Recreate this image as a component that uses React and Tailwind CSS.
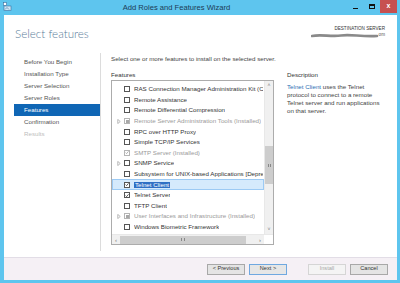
import React from 'react';

const font = { fontFamily: '"Liberation Sans", Arial, sans-serif' };

const steps = [
  { label: 'Before You Begin' },
  { label: 'Installation Type' },
  { label: 'Server Selection' },
  { label: 'Server Roles' },
  { label: 'Features', active: true },
  { label: 'Confirmation' },
  { label: 'Results', disabled: true },
];

const features = [
  { name: 'RAS Connection Manager Administration Kit (CMAK)' },
  { name: 'Remote Assistance' },
  { name: 'Remote Differential Compression' },
  { name: 'Remote Server Administration Tools (Installed)', installed: true, partial: true, expand: true },
  { name: 'RPC over HTTP Proxy' },
  { name: 'Simple TCP/IP Services' },
  { name: 'SMTP Server (Installed)', installed: true, checked: true },
  { name: 'SNMP Service', expand: true },
  { name: 'Subsystem for UNIX-based Applications [Deprecated]' },
  { name: 'Telnet Client', checked: true, selected: true },
  { name: 'Telnet Server', checked: true },
  { name: 'TFTP Client' },
  { name: 'User Interfaces and Infrastructure (Installed)', installed: true, partial: true, expand: true },
  { name: 'Windows Biometric Framework' },
];

function Checkbox({ checked, partial, installed }) {
  const border = installed ? 'border-[#b5b5b5]' : 'border-[#555]';
  return (
    <span className={`w-[6px] h-[6px] border ${border} bg-white flex items-center justify-center shrink-0`}>
      {checked && (
        <svg width="5" height="5" viewBox="0 0 10 10">
          <path d="M1.5 5.2 L4 7.8 L8.8 2" fill="none" stroke={installed ? '#9a9a9a' : '#222'} strokeWidth="1.8" />
        </svg>
      )}
      {partial && <span className="w-[3px] h-[3px] bg-[#a8a8a8]" />}
    </span>
  );
}

function FeatureRow({ f }) {
  return (
    <div className={`h-[10.6px] flex items-center pl-[1px] ${f.selected ? 'bg-[#d5eafc] border border-[#9ccaf4]' : 'border border-transparent'}`}>
      <span className="w-[10px] flex justify-center shrink-0">
        {f.expand && (
          <svg width="4" height="5" viewBox="0 0 4 6">
            <path d="M0.5 0.5 L3.5 3 L0.5 5.5 Z" fill="none" stroke="#9a9a9a" strokeWidth="0.8" />
          </svg>
        )}
      </span>
      <Checkbox checked={f.checked} partial={f.partial} installed={f.installed} />
      <span className="ml-[4px] min-w-0 overflow-hidden flex">
        <span
          className={`whitespace-nowrap text-[6.2px] leading-none ${
            f.selected ? 'bg-[#2e6fc4] text-white px-[1px]' : f.installed ? 'text-[#9a9a9a]' : 'text-[#333]'
          }`}
        >
          {f.name}
        </span>
      </span>
    </div>
  );
}

function WinButton({ children, primary, disabled }) {
  return (
    <button
      className={`h-[11px] w-[38px] text-[5.6px] leading-none flex items-center justify-center border ${
        primary
          ? 'border-[#6fa8e0] bg-[#e6e6e6] text-[#333]'
          : disabled
          ? 'border-[#d5d5d5] bg-[#f4f4f4] text-[#a8a8a8]'
          : 'border-[#a8a8a8] bg-[#e4e4e4] text-[#333]'
      }`}
    >
      {children}
    </button>
  );
}

export default function App() {
  return (
    <div className="w-[400px] h-[283px] bg-[#5ec5ee] flex flex-col overflow-hidden" style={font}>
      {/* title bar */}
      <div className="h-[15px] flex items-center relative shrink-0">
        <svg className="ml-[3px] mt-[-2px]" width="9" height="9" viewBox="0 0 9 9">
          <rect x="0.5" y="0.5" width="3" height="3" fill="#fff" stroke="#3b6f9e" strokeWidth="0.6" />
          <rect x="1" y="4" width="7" height="4.5" fill="#cfe6f5" stroke="#3b6f9e" strokeWidth="0.6" />
          <path d="M2 7.5 L4 5.5 L6 7.5" fill="none" stroke="#3b6f9e" strokeWidth="0.6" />
        </svg>
        <div className="flex-1 text-center text-[7.6px] text-[#1d3b55] pr-[6px]">Add Roles and Features Wizard</div>
        <div className="flex items-start self-start h-[13px] mr-[3px]">
          <div className="w-[17px] h-[13px] flex items-center justify-center">
            <span className="w-[5px] h-[1.5px] bg-[#111] mt-[4px]" />
          </div>
          <div className="w-[16px] h-[13px] flex items-center justify-center">
            <span className="w-[6px] h-[5px] border border-[#111] border-t-2" />
          </div>
          <div className="w-[17px] h-[13px] bg-[#c75050] flex items-center justify-center text-white text-[7px] font-bold">
            x
          </div>
        </div>
      </div>

      {/* window body */}
      <div className="flex-1 ml-[4px] mr-[3px] mb-[3px] flex flex-col bg-white">
        {/* header */}
        <div className="h-[38px] flex items-start justify-between shrink-0">
          <div className="pl-[11px] pt-[13px] text-[11.6px] leading-none text-[#5b7d9b]" style={{ fontFamily: 'Lato, "Liberation Sans", sans-serif', fontWeight: 300 }}>
            Select features
          </div>
          <div className="pr-[12px] pt-[12px] flex flex-col items-end">
            <div className="text-[4.6px] leading-none text-[#333]">DESTINATION SERVER</div>
            <div className="flex items-center mt-[1px]">
              <svg width="68" height="6" viewBox="0 0 68 6">
                <path d="M1 3 C 10 1, 20 4, 30 2.5 S 50 4, 66 3" fill="none" stroke="#8a8a8a" strokeWidth="2.6" strokeLinecap="round" />
              </svg>
              <span className="text-[4.6px] leading-none text-[#555]">om</span>
            </div>
          </div>
        </div>

        {/* content */}
        <div className="flex-1 flex min-h-0">
          {/* nav */}
          <div className="w-[97px] border-r border-[#dcdcdc] pt-[3px] mb-[6px] shrink-0">
            <div className="ml-[10px]">
              {steps.map((s) => (
                <div
                  key={s.label}
                  className={`h-[12px] flex items-center pl-[10px] text-[6.2px] leading-none ${
                    s.active ? 'bg-[#0f66b5] text-white' : s.disabled ? 'text-[#bdbdbd]' : 'text-[#555]'
                  }`}
                >
                  {s.label}
                </div>
              ))}
            </div>
          </div>

          {/* main */}
          <div className="flex-1 pl-[10px] pt-[2px] flex flex-col">
            <div className="text-[6.2px] leading-none text-[#444] h-[8px] flex items-center">
              Select one or more features to install on the selected server.
            </div>
            <div className="flex mt-[8px]">
              <div className="w-[163px] shrink-0">
                <div className="text-[6.2px] leading-none text-[#333] h-[8px] flex items-center">Features</div>
                <div className="mt-[1px] h-[165px] border border-[#acacac] flex flex-col">
                  <div className="flex-1 flex min-h-0">
                    <div className="flex-1 min-w-0 pt-[3px] overflow-hidden">
                      {features.map((f) => (
                        <FeatureRow key={f.name} f={f} />
                      ))}
                    </div>
                    <div className="w-[9px] border-l border-[#e8e8e8] bg-[#f0f0f0] flex flex-col items-center">
                      <div className="h-[9px] flex items-center justify-center text-[5px] text-[#777] leading-none">˄</div>
                      <div className="flex-1 w-full pt-[56px]">
                        <div className="h-[38px] w-full bg-[#cdcdcd] flex items-center justify-center">
                          <span className="w-[3px] h-[3px] border-x border-[#888]" />
                        </div>
                      </div>
                      <div className="h-[9px] flex items-center justify-center text-[5px] text-[#777] leading-none">˅</div>
                    </div>
                  </div>
                  <div className="h-[10px] border-t border-[#e8e8e8] bg-[#f0f0f0] flex items-center">
                    <div className="w-[8px] flex items-center justify-center text-[6px] text-[#777] leading-none">‹</div>
                    <div className="w-[126px] h-[8px] bg-[#cdcdcd] flex items-center justify-center">
                      <span className="w-[4px] h-[3px] border-x border-[#888]" />
                    </div>
                    <div className="flex-1" />
                    <div className="w-[8px] flex items-center justify-center text-[6px] text-[#777] leading-none">›</div>
                    <div className="w-[9px] h-full bg-white" />
                  </div>
                </div>
              </div>
              <div className="ml-[13px] w-[100px]">
                <div className="text-[6.2px] leading-none text-[#333] h-[8px] flex items-center">Description</div>
                <div className="mt-[4px] text-[6.2px] leading-[8px] text-[#444]">
                  <span className="text-[#2c6fb5]">Telnet Client</span> uses the Telnet
                  <br />
                  protocol to connect to a remote
                  <br />
                  Telnet server and run applications
                  <br />
                  on that server.
                </div>
              </div>
            </div>
          </div>
        </div>

        {/* footer */}
        <div className="h-[23px] bg-[#f5f0f5] border-t border-[#e2dde6] flex items-center justify-end pr-[9px] shrink-0">
          <div className="flex items-center gap-[4px]">
            <WinButton>&lt; Previous</WinButton>
            <WinButton primary>Next &gt;</WinButton>
            <div className="w-[13px]" />
            <WinButton disabled>Install</WinButton>
            <WinButton>Cancel</WinButton>
          </div>
        </div>
      </div>
    </div>
  );
}
